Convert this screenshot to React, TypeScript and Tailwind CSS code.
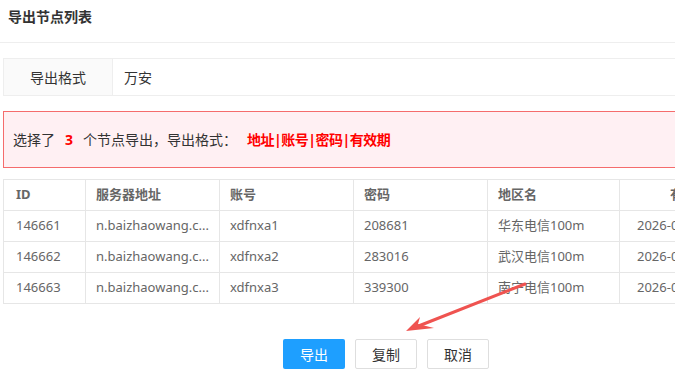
import React from "react";

const font = { fontFamily: '"Noto Sans", "Noto Sans CJK SC", sans-serif' };

const rows = [
  ["146661", "n.baizhaowang.c...", "xdfnxa1", "208681", "华东电信100m", "2026-0"],
  ["146662", "n.baizhaowang.c...", "xdfnxa2", "283016", "武汉电信100m", "2026-0"],
  ["146663", "n.baizhaowang.c...", "xdfnxa3", "339300", "南宁电信100m", "2026-0"],
];

const widths = ["w-[82px]", "w-[134px]", "w-[134px]", "w-[134px]", "w-[132px]", "w-[150px]"];

export default function App() {
  return (
    <div className="relative w-[675px] h-[372px] overflow-hidden bg-white" style={font}>
      <div className="h-[43px] border-b border-[#eeeeee] pl-[8px] pt-[7px]">
        <div className="text-[14px] leading-[20px] font-bold text-[#333]">导出节点列表</div>
      </div>
      <div className="w-[800px] pl-[3px]">
        <div className="mt-[15px] flex h-[38px] border border-[#eeeeee]">
          <div className="w-[109px] bg-[#fafafa] border-r border-[#eeeeee] flex items-center justify-center text-[14px] text-[#333]">
            导出格式
          </div>
          <div className="flex items-center pl-[11px] text-[14px] text-[#333]">万安</div>
        </div>
        <div className="mt-[15px] h-[57px] border border-[#f56c6c] bg-[#fff0f3] flex items-center pl-[9px] text-[14px] text-[#333]">
          <span>选择了</span>
          <span className="ml-[10px] font-bold text-[#ff0000]">3</span>
          <span className="ml-[10px]">个节点导出，导出格式：</span>
          <span className="ml-[10px] font-bold text-[#ff0000] tracking-[-0.5px]">地址|账号|密码|有效期</span>
        </div>
        <table className="mt-[11px] w-[766px] border-collapse table-fixed text-[13px] text-[#666]">
          <colgroup>
            {widths.map((w, i) => (
              <col key={i} className={w} />
            ))}
          </colgroup>
          <thead>
            <tr className="h-[31px]">
              {["ID", "服务器地址", "账号", "密码", "地区名", "有效期"].map((h, i) => (
                <th
                  key={h}
                  className={`border border-[#e6e6e6] text-left font-bold p-0 whitespace-nowrap ${i === 5 ? "pl-[50px]" : i === 0 ? "pl-[12px]" : "pl-[10px]"}`}
                >
                  {h}
                </th>
              ))}
            </tr>
          </thead>
          <tbody>
            {rows.map((r) => (
              <tr key={r[0]} className="h-[31px]">
                {r.map((c, i) => (
                  <td
                    key={i}
                    className={`border border-[#e6e6e6] p-0 whitespace-nowrap ${i === 5 ? "pl-[17px]" : i === 0 ? "pl-[12px]" : "pl-[10px]"}`}
                  >
                    {c}
                  </td>
                ))}
              </tr>
            ))}
          </tbody>
        </table>
      </div>
      <div className="mt-[35px] flex gap-[10px] pl-[283px]">
        <button className="w-[62px] h-[30px] rounded-[2px] bg-[#1e9fff] text-white text-[14px]">导出</button>
        <button className="w-[62px] h-[30px] rounded-[2px] border border-[#dedede] bg-white text-[#333] text-[14px]">复制</button>
        <button className="w-[62px] h-[30px] rounded-[2px] border border-[#dedede] bg-white text-[#333] text-[14px]">取消</button>
      </div>
      <svg className="absolute left-0 top-0 pointer-events-none" width="675" height="372">
        <line x1="525" y1="284" x2="416" y2="327" stroke="#ef5350" strokeWidth="3" strokeLinecap="round" />
        <polygon points="406,331 420,317 418,324 434,328" fill="#ef5350" />
      </svg>
    </div>
  );
}
